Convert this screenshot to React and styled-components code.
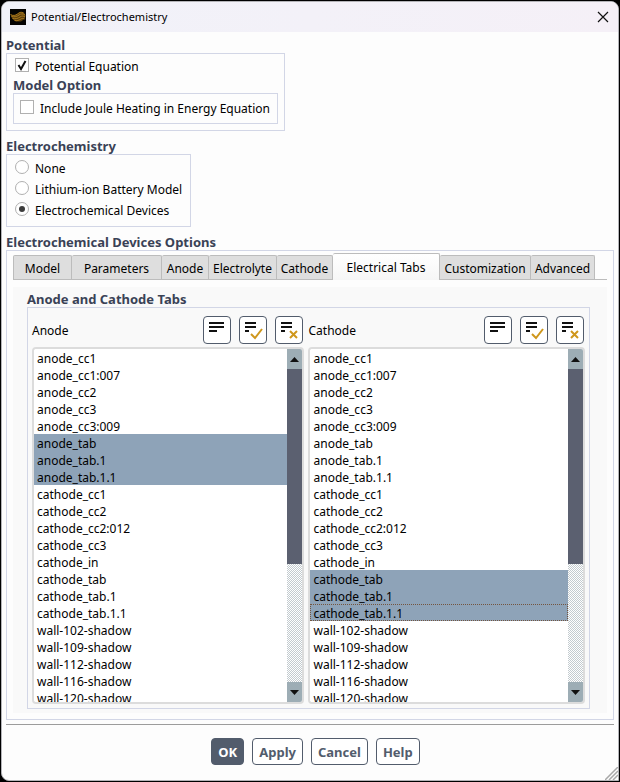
import { useRef, useState } from "react";
import styled, { createGlobalStyle } from "styled-components";

const GlobalStyle = createGlobalStyle`
    * { box-sizing: border-box; }
    body {
        margin: 0;
        padding: 1px;
        background: #000;
        color: #000;
        font-family: "Noto Sans", sans-serif;
        font-size: 12px;
        line-height: 16px;
    }
    button, input, select { font: inherit; color: inherit; margin: 0; }
`

const Window = styled.main`
    position: relative;
    min-height: calc(100vh - 2px);
    background: #fdfdfd;
    border: 1px solid #b4b4b8;
    border-radius: 8px 8px 0 8px;
    overflow: hidden;
`

const TitleBar = styled.header`
    display: flex;
    align-items: center;
    height: 30px;
    padding: 0 7px 0 8px;
    gap: 5px;
    background: linear-gradient(to right, #f1f2f9, #f5f0f7);
    h1 {
        flex: 1;
        margin: 0;
        font-size: 11px;
        font-weight: 400;
    }
`

const CloseButton = styled.button`
    display: flex;
    padding: 2px;
    border: none;
    background: none;
`

const Content = styled.form`
    padding: 5px 4px 14px;
`

const Group = styled.fieldset`
    width: ${props => props.$fill ? "auto" : "fit-content"};
    min-width: 0;
    margin: 0 0 ${props => props.$gap || 0}px;
    padding: 0;
    border: none;
    legend {
        padding: 0;
        color: #3a4256;
        font-size: 13px;
        font-weight: 700;
    }
`

const GroupBox = styled.div`
    border: 1px solid #d2d6e6;
    padding: ${props => props.$pad};
`

const Choice = styled.label`
    position: relative;
    display: flex;
    align-items: center;
    gap: 6px;
    height: 21px;
    margin-left: ${props => props.$indent || 0}px;
    input {
        appearance: none;
        display: grid;
        place-items: center;
        flex: none;
        width: 14px;
        height: 14px;
        margin-bottom: 3px;
        background: #fff;
        border: 1px solid #b0b0b0;
    }
    input[type="radio"] { border-radius: 50%; }
    input[type="radio"]:checked::before {
        content: "";
        width: 6px;
        height: 6px;
        border-radius: 50%;
        background: #3c3c3c;
    }
    svg {
        position: absolute;
        left: 0;
        top: 2px;
        display: none;
        pointer-events: none;
    }
    input:checked + svg { display: block; }
`

const TabBar = styled.div`
    display: flex;
    align-items: flex-end;
    height: 27px;
    border-bottom: 1px solid #bcbcbc;
`

const Tab = styled.button`
    flex: 0 1 ${props => props.$width}px;
    height: 24px;
    padding: 2px 0 0;
    white-space: nowrap;
    background: #dedede;
    border: 1px solid #bcbcbc;
    border-left-width: ${props => props.$first ? 1 : 0}px;
    border-bottom: none;
    border-radius: 2px 2px 0 0;
    &[aria-selected="true"] {
        height: 27px;
        margin-bottom: -1px;
        background: linear-gradient(#fff, #f6f6f6);
    }
`

const TabPanel = styled.div`
    margin-top: 7px;
    padding: 4px 17px 4px 14px;
    background: #f9f9f9;
`

const Columns = styled.div`
    display: grid;
    grid-template-columns: 272fr 276fr;
    gap: 4px;
`

const ListHeader = styled.div`
    display: flex;
    align-items: center;
    gap: 8px;
    padding-right: 1px;
    margin-bottom: 3px;
    label {
        flex: 1;
        padding-top: 2px;
    }
`

const IconButton = styled.button`
    width: 28px;
    height: 28px;
    padding: 0;
    background: #fff;
    border: 1px solid #525c6c;
    border-radius: 4px;
    svg { display: block; }
`

const ListFrame = styled.div`
    display: flex;
    height: 357px;
    background: #fff;
    border: 2px solid #dcdcdc;
    border-radius: 4px;
    overflow: hidden;
`

const ListBox = styled.select`
    flex: 1;
    min-width: 0;
    height: 100%;
    padding: 0;
    border: none;
    outline: none;
    background: #fff;
    scrollbar-width: none;
    option {
        height: 17px;
        min-height: 17px;
        padding: 1px 3px 0;
        color: #000;
    }
    option:checked {
        color: #000;
        background: #8ea3b8 linear-gradient(#8ea3b8, #8ea3b8);
    }
    option.current {
        outline: 1px dotted #74553f;
        outline-offset: -1px;
    }
`

const ScrollBar = styled.div`
    display: flex;
    flex-direction: column;
    width: 15px;
    button {
        display: grid;
        place-items: center;
        height: 20px;
        padding: 0;
        border: none;
        background: #9dadb5;
    }
`

const Track = styled.div`
    flex: 1;
    background: repeating-conic-gradient(#c3cbcf 0 25%, #fff 0 50%) 0 0 / 2px 2px;
`

const Thumb = styled.div`
    height: 62.3%;
    background: #5b6070;
`

const Footer = styled.footer`
    display: flex;
    justify-content: center;
    gap: 8px;
    margin-top: 4px;
    padding: 13px 0 0 11px;
    border-top: 1px solid #9c9c9c;
`

const ActionButton = styled.button`
    height: 27px;
    padding: 0 6px;
    font-size: 13px;
    font-weight: 700;
    color: ${props => props.$primary ? "#fff" : "#525c6c"};
    background: ${props => props.$primary ? "#525c6c" : "#fff"};
    border: 1px solid #525c6c;
    border-radius: 4px;
`

const SizeGrip = styled.svg`
    position: absolute;
    right: 0;
    bottom: 0;
`

const tabs = [
    ["Model", 59], ["Parameters", 90], ["Anode", 47], ["Electrolyte", 68],
    ["Cathode", 56], ["Electrical Tabs", 107], ["Customization", 91], ["Advanced", 64],
];

const models = ["None", "Lithium-ion Battery Model", "Electrochemical Devices"];

const zones = [
    "anode_cc1", "anode_cc1:007", "anode_cc2", "anode_cc3", "anode_cc3:009",
    "anode_tab", "anode_tab.1", "anode_tab.1.1",
    "cathode_cc1", "cathode_cc2", "cathode_cc2:012", "cathode_cc3", "cathode_in",
    "cathode_tab", "cathode_tab.1", "cathode_tab.1.1",
    "wall-102-shadow", "wall-109-shadow", "wall-112-shadow", "wall-116-shadow", "wall-120-shadow",
];

const AppIcon = () => (
    <svg width="16" height="16" viewBox="0 0 16 16">
        <rect width="16" height="16" fill="#050403" />
        <path d="M.5 5.500C3 6.500 5 6.500 7 5l3-2 4 .5 1.500 3-1 3.500-3.500 2.500H6L3 10.500 1.500 8.500z" fill="#5a3d0c" />
        <g fill="none" stroke="#c08a22" strokeWidth=".8">
            <path d="M.5 5.500C3 7 5.500 6.500 7.500 5s3.500-2.500 6-1" />
            <path d="M1.500 7.500c3 .8 5.500 0 7.500-1.500s4-1.500 6 0" />
            <path d="M2.500 9.500c3 .8 5.500-.2 7.500-1.500s3.500-1.200 5 0" />
            <path d="M4.500 11.500c2.500.5 4.500-.3 6-1.300s2.500-1 4-.2" />
        </g>
    </svg>
)

const ListIcon = ({ mark }) => (
    <svg width="26" height="26" viewBox="0 0 26 26" fill="none">
        {mark ? (
            <path d="M5 6h11M5 10h11M5 14h4" stroke="#111" strokeWidth="2" />
        ) : (
            <path d="M5 6h15M5 10h15M5 14h8" stroke="#111" strokeWidth="2" />
        )}
        {mark === "check" && <path d="M11 17l4 4 7-9" stroke="#cf971c" strokeWidth="2" />}
        {mark === "cross" && <path d="M14 14l7 7M21 14l-7 7" stroke="#cf971c" strokeWidth="2" />}
    </svg>
)

const Arrow = ({ down }) => (
    <svg width="9" height="5" viewBox="0 0 9 5">
        <path d={down ? "M0 0h9L4.500 5z" : "M0 5h9L4.500 0z"} fill="#111" />
    </svg>
)

const CheckInput = (props) => (
    <>
        <input type="checkbox" {...props} />
        <svg width="14" height="14" viewBox="0 0 14 14">
            <path d="M3.500 7l2.500 4 4.500-8" fill="none" stroke="#111" strokeWidth="2" />
        </svg>
    </>
)

const ZoneList = ({ id, title, selected, current }) => {
    const listRef = useRef(null);
    const scroll = (amount) => listRef.current.scrollBy(0, amount);
    const setAll = (test) => {
        Array.from(listRef.current.options).forEach(o => { o.selected = test(o); });
    };

    return (
        <div>
            <ListHeader>
                <label htmlFor={id}>{title}</label>
                <IconButton type="button" aria-label="Toggle" onClick={() => setAll(o => !o.selected)}><ListIcon /></IconButton>
                <IconButton type="button" aria-label="Select all" onClick={() => setAll(() => true)}><ListIcon mark="check" /></IconButton>
                <IconButton type="button" aria-label="Deselect all" onClick={() => setAll(() => false)}><ListIcon mark="cross" /></IconButton>
            </ListHeader>
            <ListFrame>
                <ListBox id={id} ref={listRef} multiple defaultValue={selected}>
                    {zones.map(zone => (
                        <option key={zone} value={zone} className={zone === current ? "current" : undefined}>{zone}</option>
                    ))}
                </ListBox>
                <ScrollBar>
                    <button type="button" aria-label="Scroll up" onClick={() => scroll(-17)}><Arrow /></button>
                    <Track><Thumb /></Track>
                    <button type="button" aria-label="Scroll down" onClick={() => scroll(17)}><Arrow down /></button>
                </ScrollBar>
            </ListFrame>
        </div>
    )
}

const App = () => {
    const [tab, setTab] = useState("Electrical Tabs");
    const [model, setModel] = useState("Electrochemical Devices");

    return (
        <>
            <GlobalStyle />
            <Window>
                <TitleBar>
                    <AppIcon />
                    <h1>Potential/Electrochemistry</h1>
                    <CloseButton type="button" aria-label="Close">
                        <svg width="12" height="12" viewBox="0 0 12 12">
                            <path d="M1 1l10 10M11 1L1 11" stroke="#111" strokeWidth="1.2" />
                        </svg>
                    </CloseButton>
                </TitleBar>
                <Content onSubmit={e => e.preventDefault()}>
                    <Group $gap={7}>
                        <legend>Potential</legend>
                        <GroupBox $pad="2px 6px 6px">
                            <Choice $indent={2}>
                                <CheckInput defaultChecked />
                                Potential Equation
                            </Choice>
                            <Group>
                                <legend>Model Option</legend>
                                <GroupBox $pad="4px 7px 4px 6px">
                                    <Choice>
                                        <CheckInput />
                                        Include Joule Heating in Energy Equation
                                    </Choice>
                                </GroupBox>
                            </Group>
                        </GroupBox>
                    </Group>
                    <Group $gap={7}>
                        <legend>Electrochemistry</legend>
                        <GroupBox $pad="3px 8px 5px">
                            {models.map(name => (
                                <Choice key={name}>
                                    <input type="radio" name="model" checked={model === name} onChange={() => setModel(name)} />
                                    {name}
                                </Choice>
                            ))}
                        </GroupBox>
                    </Group>
                    <Group $fill>
                        <legend>Electrochemical Devices Options</legend>
                        <GroupBox $pad="2px 6px 6px">
                            <TabBar role="tablist">
                                {tabs.map(([name, width], i) => (
                                    <Tab
                                        key={name}
                                        type="button"
                                        role="tab"
                                        aria-selected={tab === name}
                                        $width={width}
                                        $first={i === 0}
                                        onClick={() => setTab(name)}
                                    >
                                        {name}
                                    </Tab>
                                ))}
                            </TabBar>
                            <TabPanel role="tabpanel">
                                <Group $fill>
                                    <legend>Anode and Cathode Tabs</legend>
                                    <GroupBox $pad="8px 4px 4px">
                                        <Columns>
                                            <ZoneList
                                                id="anode"
                                                title="Anode"
                                                selected={["anode_tab", "anode_tab.1", "anode_tab.1.1"]}
                                            />
                                            <ZoneList
                                                id="cathode"
                                                title="Cathode"
                                                selected={["cathode_tab", "cathode_tab.1", "cathode_tab.1.1"]}
                                                current="cathode_tab.1.1"
                                            />
                                        </Columns>
                                    </GroupBox>
                                </Group>
                            </TabPanel>
                        </GroupBox>
                    </Group>
                    <Footer>
                        <ActionButton type="submit" $primary>OK</ActionButton>
                        <ActionButton type="button">Apply</ActionButton>
                        <ActionButton type="button">Cancel</ActionButton>
                        <ActionButton type="button">Help</ActionButton>
                    </Footer>
                </Content>
                <SizeGrip width="13" height="13" viewBox="0 0 13 13">
                    <path d="M0 13L13 0M4 13l9-9M8 13l5-5" stroke="#a8a8a8" strokeWidth="1.5" />
                </SizeGrip>
            </Window>
        </>
    )
}

export default App
